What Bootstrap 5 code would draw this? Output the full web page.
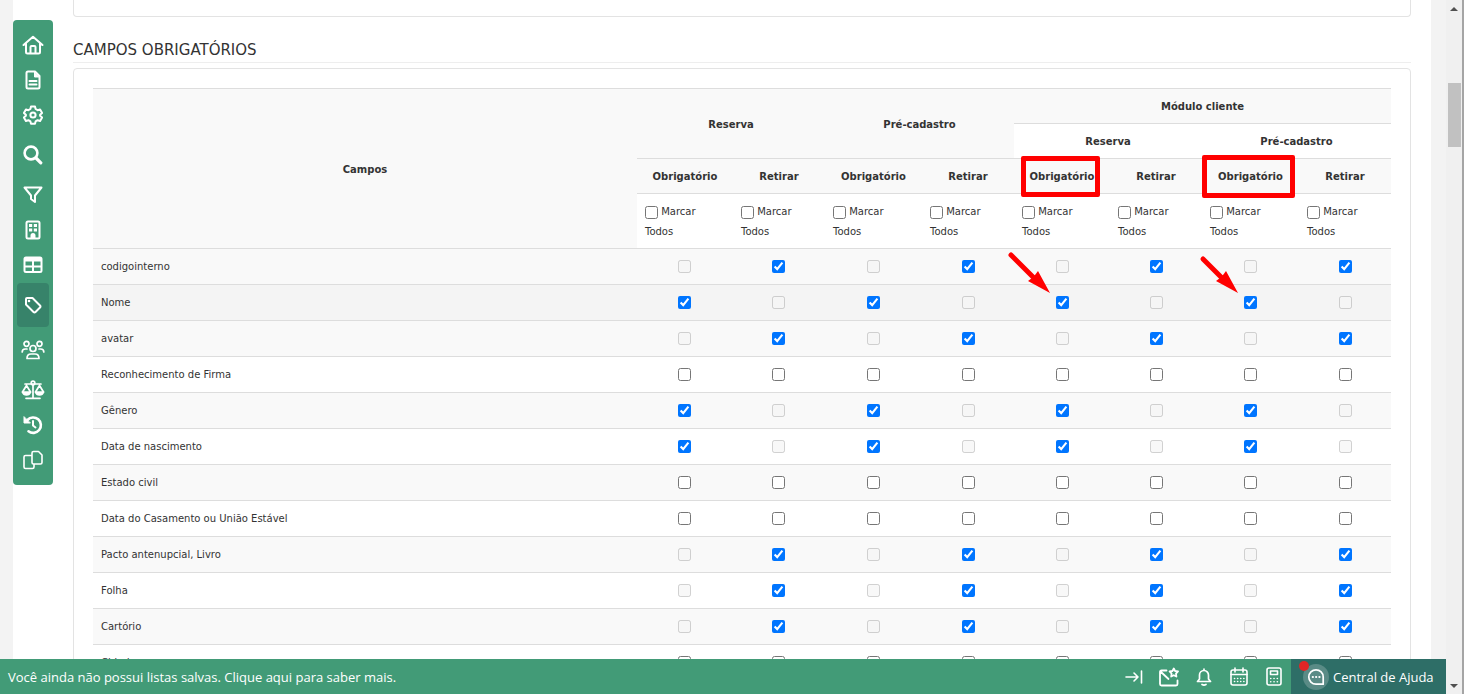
<!DOCTYPE html>
<html lang="pt-BR">
<head>
<meta charset="utf-8">
<meta name="viewport" content="width=device-width, initial-scale=1">
<title>Campos obrigatórios</title>
<link rel="stylesheet" href="https://cdn.jsdelivr.net/npm/bootstrap@5.3.0/dist/css/bootstrap.min.css">
<style>
  body { font-family: "DejaVu Sans", Verdana, sans-serif; font-size: 10px; line-height: 20px; color: #333; background: #f3f3f3; }
  svg { display: block; fill: none; stroke: currentColor; stroke-linecap: round; stroke-linejoin: round; }
  .workspace { min-height: 0; padding: 0 15px 0 13px; }
  .sheet { min-width: 0; }
  .side-menu { width: 40px; margin-top: 20px; padding: 7px 4px 8px; border-radius: 4px; background: #429b77; stroke-width: 2; }
  .side-menu a { display: flex; align-items: center; justify-content: center; height: 35px; color: #fff; border-radius: 4px; }
  .side-menu a.tall { height: 45px; }
  .side-menu a.current { height: 44px; margin-top: 1px; background: #37836a; }
  .content-area { min-width: 0; padding: 0 20px; }
  .panel { border: 1px solid #e3e3e3; border-radius: 4px; }
  .panel-end { height: 17px; border-top: 0; border-radius: 0 0 4px 4px; }
  .panel-body { padding: 19px; }
  .section-title { font-size: 15px; line-height: 24px; padding: 21px 0 0; margin: 0 0 5px; border-bottom: 1px solid #eee; }
  .fields { table-layout: fixed; border-collapse: separate; border-spacing: 0; color: #333; }
  .fields > :not(caption) > * > * { padding: 7px 8px; border-width: 1px 0 0; border-color: #ddd; color: #333; box-shadow: none; background: #fff; }
  .fields > thead > tr > * { padding: 8px 8px 6px; }
  .fields > * > tr:nth-child(odd) > * { background: #f9f9f9; }
  .fields > tbody > tr.hovered > * { background: #f4f4f4; }
  .fields > tbody > tr { height: 36px; }
  .fields input { width: 13px; height: 13px; margin: 0; vertical-align: middle; }
  .c-a { width: 96px; } .c-b { width: 92px; } .c-c { width: 97px; }
  .frame { border: 5px solid #f00; border-radius: 2px; pointer-events: none; }
  .frame-narrow { left: 7px; top: -3px; width: 79px; height: 41px; }
  .frame-wide { left: 0; top: -4px; width: 93px; height: 43px; }
  .pointer { left: -6px; top: -35px; z-index: 2; color: #f00; pointer-events: none; }
  .status-bar { height: 35px; background: #429b77; color: #fff; font-family: "Open Sans", "Noto Sans", sans-serif; font-size: 13px; font-weight: 500; stroke-width: 2; }
  .status-bar a, .status-bar button { color: #fff; text-decoration: none; font-weight: 500; }
  .tool { width: 35px; padding: 0; border: 0; background: none; display: flex; justify-content: center; }
  .help { width: 155px; padding: 0 0 0 12px; border: 0; background: #2e6e67; gap: 4px; }
  .help-icon { width: 26px; height: 26px; background: #5a8b86; }
  .alert-dot { left: -4px; top: -3px; width: 10px; height: 10px; background: #e02626; }
  .scroll-rail { width: 18px; background: #f0f0f0; border-right: 2px solid #a5a5a5; padding: 7px 0 5px; }
  .scroll-thumb { width: 13px; height: 64px; margin-top: 71px; background: #c1c1c1; }
</style>
</head>
<body class="d-flex vh-100 overflow-hidden">
<div class="d-flex flex-column flex-grow-1 overflow-hidden">
  <div class="workspace d-flex flex-grow-1 overflow-hidden">
    <div class="sheet d-flex flex-grow-1 align-items-start bg-white h-100">
      <nav class="side-menu flex-shrink-0" aria-label="Menu principal">
        <a href="#" aria-label="Início"><svg width="22" height="20" viewBox="0 0 22 20"><path d="M1.500 10 11 1.800 20.500 10M4 8.500V17q0 1.500 1.500 1.500h11Q18 18.500 18 17V8.500M8.500 18v-6q0-1 1-1h3q1 0 1 1v6"/></svg></a>
        <a href="#" aria-label="Documentos"><svg width="16" height="20" viewBox="0 0 16 20"><path d="M3 1.500h7L14.500 6v11q0 1.500-1.500 1.500H3Q1.500 18.500 1.500 17V3Q1.500 1.500 3 1.500zM4.500 11h7M4.500 14.500h7"/><path d="M9.500 2v5h5z" fill="currentColor" stroke-width="1"/></svg></a>
        <a href="#" aria-label="Configurações"><svg width="20" height="20" viewBox="0 0 20 20"><path d="M8 1.500h4l.6 2.500 2 1.200 2.500-.8 2 3.500-2 1.800v1l2 1.800-2 3.500-2.500-.8-2 1.200-.6 2.300H8l-.6-2.300-2-1.200-2.500.8-2-3.500 2-1.800v-1l-2-1.800 2-3.500 2.500.8 2-1.200z"/><circle cx="10" cy="10" r="2.600"/></svg></a>
        <a href="#" class="tall" aria-label="Buscar"><svg width="20" height="20" viewBox="0 0 20 20" stroke-width="2.600"><circle cx="8" cy="8" r="6.400"/><path d="m13 13 4.800 4.800" stroke-width="3.200"/></svg></a>
        <a href="#" aria-label="Filtros"><svg width="20" height="18" viewBox="0 0 20 18"><path d="M1.500 1.500h17l-6.500 8V16l-4-3V9.500z"/></svg></a>
        <a href="#" aria-label="Empreendimentos"><svg width="16" height="20" viewBox="0 0 16 20"><rect x="1.500" y="1.500" width="13" height="17" rx="1.500"/><path fill="currentColor" stroke="none" d="M4 4h3.200v3H4zM8.800 4H12v3H8.800zM4 8.500h3.200v3H4zM8.800 8.500H12v3H8.800zM5.500 18.500v-3a2.500 2.500 0 0 1 5 0v3z"/></svg></a>
        <a href="#" aria-label="Tabelas"><svg width="20" height="18" viewBox="0 0 20 18"><rect x="1.500" y="1.500" width="17" height="14.500" rx="1.500"/><path d="M2 3h16M2 4.500h16M10 5v11M2 10.500h16"/></svg></a>
        <a href="#" class="current" aria-label="Etiquetas" aria-current="page"><svg width="18" height="18" viewBox="0 0 18 18"><path d="M2 3q0-1 1-1h5.500l7.500 7.500q1 1 0 2l-4.500 4.500q-1 1-2 0L2 8.500z"/><circle cx="5" cy="5" r="1.300" fill="currentColor" stroke="none"/></svg></a>
        <a href="#" class="tall" aria-label="Clientes"><svg width="24" height="20" viewBox="0 0 24 20" stroke-width="1.700"><circle cx="5.500" cy="3.800" r="2.500"/><circle cx="18.500" cy="3.800" r="2.500"/><circle cx="12" cy="8.500" r="3"/><path d="M1.200 12q0-3 3-3H6M22.800 12q0-3-3-3H18M6 18.500q0-4.500 4-4.500h4q4 0 4 4.500z"/></svg></a>
        <a href="#" aria-label="Jurídico"><svg width="24" height="20" viewBox="0 0 24 20" stroke-width="1.700"><path d="M4 4h16M12 4v14M5 18.300h14M1.500 12 5.500 5.500 9.500 12M14.500 12l4-6.500 4 6.500"/><path fill="currentColor" d="M1.500 12h8q-1 3-4 3t-4-3zM14.500 12h8q-1 3-4 3t-4-3z"/><circle cx="12" cy="3" r="1.800"/></svg></a>
        <a href="#" aria-label="Histórico"><svg width="20" height="20" viewBox="0 0 20 20"><path d="M4.500 5A7.700 7.700 0 1 1 5.500 16.300" stroke-width="2.600"/><path d="M1 2v6h6z" fill="currentColor" stroke-width="1"/><path d="M10 6v4.500l2.500 2"/></svg></a>
        <a href="#" aria-label="Copiar"><svg width="20" height="20" viewBox="0 0 20 20" stroke-width="1.600"><path d="M10.500 1.500h5l3.500 3.500v7.500q0 1.500-1.500 1.500h-7Q9 14 9 12.500V3q0-1.500 1.500-1.500zM9 5.500H2.500Q1 5.500 1 7v10q0 1.500 1.500 1.500h7Q11 18.500 11 17v-3"/></svg></a>
      </nav>
      <main class="content-area flex-grow-1">
        <div class="panel panel-end"></div>
        <h2 class="section-title fw-normal">CAMPOS OBRIGATÓRIOS</h2>
        <div class="panel panel-body">
          <table class="table fields mb-0 align-middle">
            <colgroup><col><col class="c-a"><col class="c-b"><col class="c-c"><col class="c-b"><col class="c-a"><col class="c-b"><col class="c-c"><col class="c-b"></colgroup>
            <thead class="text-center align-middle">
              <tr><th rowspan="4">Campos</th><th rowspan="2" colspan="2">Reserva</th><th rowspan="2" colspan="2">Pré-cadastro</th><th colspan="4">Módulo cliente</th></tr>
              <tr><th colspan="2">Reserva</th><th colspan="2">Pré-cadastro</th></tr>
              <tr><th>Obrigatório</th><th>Retirar</th><th>Obrigatório</th><th>Retirar</th><th class="position-relative">Obrigatório<span class="frame frame-narrow position-absolute"></span></th><th>Retirar</th><th class="position-relative">Obrigatório<span class="frame frame-wide position-absolute"></span></th><th>Retirar</th></tr>
              <tr id="markAll" class="text-start"></tr>
            </thead>
            <tbody id="fieldRows"></tbody>
          </table>
        </div>
      </main>
    </div>
  </div>
  <footer class="status-bar d-flex flex-shrink-0 align-items-stretch">
    <a href="#" class="flex-grow-1 align-self-center ps-2">Você ainda não possui listas salvas. Clique aqui para saber mais.</a>
    <button class="tool align-items-center" type="button" aria-label="Recolher"><svg width="18" height="14" viewBox="0 0 18 14" stroke-width="1.600"><path d="M1 7h12M9 3l4 4-4 4M16.500 1v12"/></svg></button>
    <button class="tool align-items-center" type="button" aria-label="Mensagens"><svg width="22" height="20" viewBox="0 0 22 20" stroke-width="1.800"><path d="M8.500 3.500H3.500Q2 3.500 2 5v12q0 1.500 1.500 1.500h14.500Q19.500 18.500 19.500 17v-3.500M2.500 4.500l8 7.500"/><path d="m15.800 1.500 1.300 2.500 2.900.5-2 2.100.4 2.900-2.600-1.300-2.600 1.300.4-2.900-2-2.100 2.900-.5z"/></svg></button>
    <button class="tool align-items-center" type="button" aria-label="Notificações"><svg width="16" height="18" viewBox="0 0 16 18" stroke-width="1.700"><path d="M8 1v1.500M3.500 11V7a4.500 4.500 0 0 1 9 0v4l2 2.500h-13zM6 16.500q2 1.200 4 0"/></svg></button>
    <button class="tool align-items-center" type="button" aria-label="Agenda"><svg width="18" height="19" viewBox="0 0 18 19" stroke-width="1.600"><rect x="1" y="3" width="16" height="15" rx="2"/><path d="M1 7.500h16M5 1v4M13 1v4"/><path stroke-dasharray=".1 3" d="M4.500 11.500h10M4.500 14.500h10"/></svg></button>
    <button class="tool align-items-center" type="button" aria-label="Calculadora"><svg width="16" height="19" viewBox="0 0 16 19" stroke-width="1.600"><rect x="1" y="1" width="14" height="17" rx="2"/><rect x="4.500" y="4" width="7" height="3.500"/><path stroke-dasharray=".1 3.200" d="M4.700 11.500h7M4.700 14.700h7"/></svg></button>
    <button class="help d-flex align-items-center" type="button"><span class="help-icon rounded-circle position-relative d-flex align-items-center justify-content-center"><svg width="18" height="18" viewBox="0 0 18 18" stroke-width="1.700"><path d="M16 16.200H9A7.200 7.200 0 1 1 16.200 9v7.200z"/><path stroke-width="2.200" stroke-dasharray=".1 3.200" d="M5.800 9h7"/></svg><span class="alert-dot rounded-circle position-absolute"></span></span>Central de Ajuda</button>
  </footer>
</div>
<div class="scroll-rail d-flex flex-column align-items-center flex-shrink-0" aria-hidden="true">
  <svg width="8" height="5" viewBox="0 0 8 5"><path fill="#505050" stroke="none" d="M4 0 8 4H0z"/></svg>
  <div class="scroll-thumb"></div>
  <svg class="mt-auto" width="8" height="5" viewBox="0 0 8 5"><path fill="#505050" stroke="none" d="M0 0h8L4 4z"/></svg>
</div>
<script src="https://cdn.jsdelivr.net/npm/bootstrap@5.3.0/dist/js/bootstrap.bundle.min.js"></script>
<script>
  // state: 'r' = retirar, 'o' = obrigatório, '' = nenhum
  const fields = [
    ['codigointerno', 'r'], ['Nome', 'o'], ['avatar', 'r'], ['Reconhecimento de Firma', ''],
    ['Gênero', 'o'], ['Data de nascimento', 'o'], ['Estado civil', ''],
    ['Data do Casamento ou União Estável', ''], ['Pacto antenupcial, Livro', 'r'],
    ['Folha', 'r'], ['Cartório', 'r'], ['Cidade', '']
  ];
  const arrow = start => `<svg class="pointer position-absolute" width="44" height="45" viewBox="0 0 44 45"><path stroke-width="5" d="M${start} 29 31"/><path fill="currentColor" stroke="none" d="M42 43 20 31 24 28 27 25 30 21z"/></svg>`;
  document.getElementById('markAll').innerHTML = Array.from({length: 8}, (_, i) =>
    `<td><input type="checkbox" id="all${i}"> <label class="d-inline" for="all${i}">Marcar Todos</label></td>`).join('');
  document.getElementById('fieldRows').innerHTML = fields.map(([name, state], row) => {
    const cells = Array.from({length: 8}, (_, i) => {
      const kind = i % 2 ? 'r' : 'o';
      const attr = state === '' ? '' : state === kind ? 'checked' : 'disabled';
      const mark = row === 1 && i === 4 ? arrow('3 5') : row === 1 && i === 6 ? arrow('7 9') : '';
      return `<td class="text-center position-relative"><input type="checkbox" ${attr} aria-label="${name}: ${i % 2 ? 'Retirar' : 'Obrigatório'}">${mark}</td>`;
    }).join('');
    return `<tr class="${row === 1 ? 'hovered' : ''}"><td>${name}</td>${cells}</tr>`;
  }).join('');
</script>
</body>
</html>
